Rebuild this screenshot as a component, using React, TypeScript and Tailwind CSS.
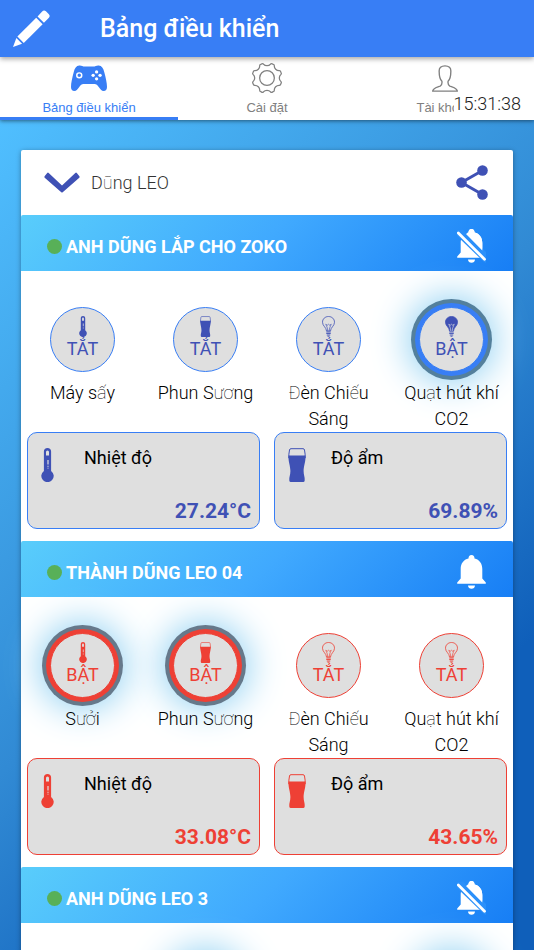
import React, { useState } from "react";
import clsx from "clsx";

type Kind = "thermo" | "pint" | "bulb";
type Tone = "blue" | "red";

interface Device {
  name: string;
  kind: Kind;
  on: boolean;
}

interface Sensor {
  name: string;
  kind: Kind;
  value: string;
}

interface Station {
  title: string;
  tone: Tone;
  muted: boolean;
  devices: Device[];
  sensors: Sensor[];
}

const stations: Station[] = [
  {
    title: "ANH DŨNG LẮP CHO ZOKO",
    tone: "blue",
    muted: true,
    devices: [
      { name: "Máy sấy", kind: "thermo", on: false },
      { name: "Phun Sương", kind: "pint", on: false },
      { name: "Đèn Chiếu Sáng", kind: "bulb", on: false },
      { name: "Quạt hút khí CO2", kind: "bulb", on: true },
    ],
    sensors: [
      { name: "Nhiệt độ", kind: "thermo", value: "27.24°C" },
      { name: "Độ ẩm", kind: "pint", value: "69.89%" },
    ],
  },
  {
    title: "THÀNH DŨNG LEO 04",
    tone: "red",
    muted: false,
    devices: [
      { name: "Sưởi", kind: "thermo", on: true },
      { name: "Phun Sương", kind: "pint", on: true },
      { name: "Đèn Chiếu Sáng", kind: "bulb", on: false },
      { name: "Quạt hút khí CO2", kind: "bulb", on: false },
    ],
    sensors: [
      { name: "Nhiệt độ", kind: "thermo", value: "33.08°C" },
      { name: "Độ ẩm", kind: "pint", value: "43.65%" },
    ],
  },
  {
    title: "ANH DŨNG LEO 3",
    tone: "blue",
    muted: true,
    devices: [
      { name: "Sưởi", kind: "thermo", on: false },
      { name: "Phun Sương", kind: "pint", on: true },
      { name: "Đèn Chiếu Sáng", kind: "bulb", on: false },
      { name: "Quạt hút khí CO2", kind: "bulb", on: true },
    ],
    sensors: [],
  },
];

/* ---------- icons ---------- */

const PencilIcon = () => (
  <svg viewBox="0 0 110 110" className="w-[37px] h-[37px]" fill="currentColor">
    <path d="M0 110 10 83 27 100Z" />
    <path d="M13 79 69 23 88 42 32 98Z" />
    <path d="M73 19 86 5Q92-1 98 4L106 12Q112 18 106 24L92 38Z" />
  </svg>
);

const GamepadIcon = () => (
  <svg viewBox="0 0 109 78" className="w-[36px] h-[26px]" fill="currentColor">
    <path d="M25 1C31 0 35 4 42 4H67C74 4 78 0 84 1C93 2 98 9 101 22C105 37 109 54 109 66C109 74 105 78 99 78C92 78 89 73 84 66C80 60 77 57 71 57H38C32 57 29 60 25 66C20 73 17 78 10 78C4 78 0 74 0 66C0 54 4 37 8 22C11 9 16 2 25 1Z" />
    <circle cx="25" cy="31" r="7.5" fill="none" stroke="#fff" strokeWidth="4.5" />
    <g fill="#fff">
      <circle cx="67" cy="31" r="5" />
      <circle cx="88" cy="31" r="5" />
      <circle cx="77.5" cy="20.5" r="5" />
      <circle cx="77.5" cy="41.5" r="5" />
    </g>
  </svg>
);

// eight teeth with a scooped valley between each pair
const gearPoint = (deg: number, r: number) => {
  const a = (deg * Math.PI) / 180;
  return `${(50 + r * Math.cos(a)).toFixed(1)} ${(50 + r * Math.sin(a)).toFixed(1)}`;
};
const gearPath =
  Array.from({ length: 8 }, (_, i) => {
    const mid = i * 45 + 22.5;
    return `${i === 0 ? "M" : "L"}${gearPoint(mid - 8, 45)}Q${gearPoint(mid - 6, 48)} ${gearPoint(mid, 47)}Q${gearPoint(mid + 6, 48)} ${gearPoint(mid + 8, 45)}A15 15 0 0 0 ${gearPoint(mid + 37, 45)}`;
  }).join("") + "Z";

const GearIcon = () => (
  <svg viewBox="0 0 100 100" className="w-8 h-8" fill="none" stroke="currentColor" strokeWidth="4" strokeLinejoin="round">
    <path d={gearPath} />
    <circle cx="50" cy="50" r="23" />
  </svg>
);

const PersonIcon = () => (
  <svg viewBox="0 0 76 78" className="w-[26px] h-[27px]" fill="none" stroke="currentColor" strokeWidth="4" strokeLinejoin="round">
    <path d="M38 2C49 2 56 8 55 19C55 32 53 41 47 47C46 55 46 58 52 61C62 65 73 66 74 76H2C3 66 14 65 24 61C30 58 30 55 29 47C23 41 21 32 21 19C20 8 27 2 38 2Z" />
  </svg>
);

const ShareIcon = () => (
  <svg viewBox="0 0 32 35" className="w-8 h-[35px]" fill="currentColor">
    <path d="M26.5 5.5 5.5 17.500 26.5 29.5" fill="none" stroke="currentColor" strokeWidth="3" />
    <circle cx="5.5" cy="17.5" r="5.3" />
    <circle cx="26.5" cy="5.5" r="5.3" />
    <circle cx="26.5" cy="29.5" r="5.3" />
  </svg>
);

const ChevronIcon = () => (
  <svg viewBox="0 0 36 21" className="w-9 h-[21px]" fill="currentColor">
    <path d="M.6 4.300 3.200 1Q3.900.2 4.700.9L18 13.500 31.300.9Q32.100.2 32.800 1L35.400 4.300Q36 5 35.300 5.700L18.700 20.200Q18 20.800 17.300 20.200L.7 5.700Q0 5 .6 4.300Z" />
  </svg>
);

const BellIcon = ({ muted }: { muted: boolean }) => (
  <svg viewBox="0 0 29 34" className="w-[29px] h-[34px]" fill="currentColor">
    <path d="M14.500 0C16.500 0 17.500 1.300 17.500 3.500C22.500 4.700 25.300 8.500 25.300 14V23.500L28.800 27.500V28.800H.2V27.500L3.700 23.500V14C3.700 8.500 6.500 4.700 11.500 3.500C11.500 1.300 12.500 0 14.500 0Z" />
    <path d="M11 30.400H18C17.800 32.500 16.500 33.700 14.500 33.700S11.200 32.500 11 30.400Z" />
    {muted && (
      <>
        <path d="M-1 6V1.500L6 .5 30 24V34L27 33Z" fill="#2b90fa" />
        <path d="M11.500 3.500C11.500 1.300 12.500 0 14.500 0S17.500 1.300 17.500 3.500C22.500 4.700 25.300 8.500 25.300 14V21.500L9 5Z" />
        <path d="M1.300 4 27.500 30.200" stroke="currentColor" strokeWidth="2.8" strokeLinecap="round" />
      </>
    )}
  </svg>
);

const DeviceIcon = ({ kind, lit, className }: { kind: Kind; lit?: boolean; className?: string }) => {
  if (kind === "thermo") {
    return (
      <svg viewBox="0 0 13 34" className={className} fill="currentColor">
        <path d="M6.500 0C8.700 0 10.100 1.500 10.100 3.500V22.900A6.200 6.200 0 1 1 2.900 22.900V3.500C2.900 1.500 4.300 0 6.500 0Z" />
        <path d="M5 7.500V4Q5 2.400 6.500 2.400T8 4V7.500Z" fill="#dfdfdf" />
        <path d="M7 12V16.500M7 17.700V18.700M7 19.700V20.500" stroke="#dfdfdf" strokeWidth="1.2" />
      </svg>
    );
  }
  if (kind === "pint") {
    return (
      <svg viewBox="0 0 18 34" className={className} fill="currentColor">
        <path d="M3 .7H15Q16.300.7 16.500 2C17 5 17.400 7.500 17.200 10H.8C.6 7.500 1 5 1.500 2Q1.700.7 3 .7Z" fill="none" stroke="currentColor" strokeWidth="1" />
        <path d="M.5 7.500H17.500C17.800 14 15.600 18 15.600 23C15.600 27 17 29 16.700 32.500Q16.500 34 15.200 34H2.800Q1.500 34 1.300 32.500C1 29 2.400 27 2.400 23C2.400 18 .2 14 .5 7.500Z" />
      </svg>
    );
  }
  return (
    <svg viewBox="0 0 26 42" className={className} fill="none" stroke="currentColor" strokeWidth="1.6">
      <path
        d="M9 30C9 23 1 20 1 12.500C1 6 6 1 13 1S25 6 25 12.500C25 20 17 23 17 30Z"
        fill={lit ? "currentColor" : "none"}
      />
      <path
        d="M11.500 30C11.500 24 9 20 7.500 16.500L10.500 18.500 13 16.500 15.500 18.500 18.500 16.500C17 20 14.500 24 14.500 30"
        stroke={lit ? "#dfdfdf" : "currentColor"}
        strokeWidth="1.3"
      />
      <path d="M8.500 32H17.500M8.500 35H17.500M9.500 38H16.500M11 40.500H15" strokeWidth="1.8" />
    </svg>
  );
};

/* ---------- pieces ---------- */

// accented letters missing from the light face are set in the thin one
const LightText = ({ text }: { text: string }) => (
  <>
    {text.split(/([ũấươởĐếạ]+)/).map((part, i) =>
      i % 2 ? (
        <span key={i} className="font-thin">
          {part}
        </span>
      ) : (
        part
      )
    )}
  </>
);

const deviceSize: Record<Kind, string> = {
  thermo: "w-2 h-[21px]",
  pint: "w-[11px] h-[21px]",
  bulb: "w-[13px] h-[21px]",
};

const DeviceButton = ({ device, tone }: { device: Device; tone: Tone }) => {
  const [on, setOn] = useState(device.on);

  return (
    <div className="flex flex-col items-center gap-2">
      <button
        type="button"
        aria-label={`${device.name} ${on ? "BẬT" : "TẮT"}`}
        onClick={() => setOn(!on)}
        className={clsx(
          "flex w-[65px] h-[65px] flex-col items-center rounded-full border bg-[#dfdfdf] pt-2",
          tone === "blue" ? "border-[#387ef5] text-[#3f51b5]" : "border-[#ee4035] text-[#ee4035]",
          on && tone === "blue" && "shadow-[0_0_0_4px_#387ef5,0_0_0_8px_#54809c,0_0_36px_11px_#8fd0f2]",
          on && tone === "red" && "shadow-[0_0_0_4px_#ee4035,0_0_0_8px_#66798b,0_0_36px_11px_#8fd0f2]"
        )}
      >
        <DeviceIcon kind={device.kind} lit={on} className={deviceSize[device.kind]} />
        <span className="text-[18px] leading-6">{on ? "BẬT" : "TẮT"}</span>
      </button>
      <p className="h-[52px] px-3 text-center text-[18px] leading-[26px] font-light text-black">
        <LightText text={device.name} />
      </p>
    </div>
  );
};

const SensorCard = ({ sensor, tone }: { sensor: Sensor; tone: Tone }) => (
  <div
    className={clsx(
      "flex h-[97px] flex-col justify-between rounded-[10px] border bg-[#dfdfdf] pr-2",
      tone === "blue" ? "border-[#387ef5] text-[#3f51b5]" : "border-[#ee4035] text-[#ee4035]"
    )}
  >
    <div className="flex items-start pt-[15px]">
      <div className="w-14 pl-[13px]">
        <DeviceIcon kind={sensor.kind} className={sensor.kind === "pint" ? "w-[18px] h-[34px]" : "w-[13px] h-[34px]"} />
      </div>
      <span className="text-[18px] leading-5 text-black">{sensor.name}</span>
    </div>
    <strong className="pb-[3px] text-right text-[21px] leading-7 font-bold">{sensor.value}</strong>
  </div>
);

const StationSection = ({ station }: { station: Station }) => {
  const [muted, setMuted] = useState(station.muted);

  return (
    <section>
      <div className="flex h-14 items-center rounded-t-xs bg-[linear-gradient(135deg,#59cdfb,#40a9fe_50%,#177ef5)] pt-1.5 pr-[27px] pl-[26px]">
        <span className="w-[15px] h-[15px] rounded-full bg-[#58b058]" />
        <h2 className="flex-1 pt-0.5 pl-1 text-[18px] leading-6 font-bold text-white">{station.title}</h2>
        <button type="button" aria-label="Thông báo" className="text-white" onClick={() => setMuted(!muted)}>
          <BellIcon muted={muted} />
        </button>
      </div>
      <div className="pt-9 pb-3">
        <div className="grid grid-cols-4">
          {station.devices.map((device) => (
            <DeviceButton key={device.name} device={device} tone={station.tone} />
          ))}
        </div>
        <div className="grid grid-cols-2 gap-3.5 px-1.5">
          {station.sensors.map((sensor) => (
            <SensorCard key={sensor.name} sensor={sensor} tone={station.tone} />
          ))}
        </div>
      </div>
    </section>
  );
};

const tabs = [
  { label: "Bảng điều khiển", icon: <GamepadIcon /> },
  { label: "Cài đặt", icon: <GearIcon /> },
  { label: "Tài khoản", icon: <PersonIcon /> },
];

const App = () => {
  const [active, setActive] = useState(0);

  return (
    <div className="flex h-screen flex-col overflow-hidden font-[Roboto,sans-serif]">
      <header className="z-20 flex h-[57px] shrink-0 items-center bg-[#387ef5] pl-[13px] text-white shadow-[0_2px_5px_rgba(0,0,0,0.35)]">
        <button type="button" aria-label="Chỉnh sửa">
          <PencilIcon />
        </button>
        <h1 className="pl-[50px] text-[25px] leading-8 font-medium">Bảng điều khiển</h1>
      </header>

      <nav className="relative z-10 grid shrink-0 grid-cols-3 bg-white shadow-[0_1px_4px_rgba(0,0,0,0.5)]">
        {tabs.map((tab, i) => (
          <button
            key={tab.label}
            type="button"
            onClick={() => setActive(i)}
            className={clsx(
              "flex flex-col items-center border-b-[3px] pt-[5px] font-['Liberation_Sans',Arial,sans-serif]",
              active === i ? "border-[#387ef5] text-[#387ef5]" : "border-transparent text-[#808080]"
            )}
          >
            <span className="flex h-8 items-center">{tab.icon}</span>
            <span className="mt-1 text-[13px] leading-[19px]">{tab.label}</span>
          </button>
        ))}
        {/* Clock sits over the last tab */}
        <time className="absolute right-[13px] bottom-1 bg-white text-[18px] leading-6 font-light text-[#222]">15:31:38</time>
      </nav>

      <main className="flex-1 overflow-y-auto bg-[linear-gradient(135deg,#50bfff,#318ad4_48%,#0f5fba_77%)] px-[21px] pt-[30px] [scrollbar-width:none]">
        <div className="rounded-xs bg-white shadow-[0_1px_5px_rgba(0,0,0,0.35)]">
          <div className="flex h-[65px] items-center pr-[25px] pl-[23px] text-[#3f51b5]">
            <button type="button" aria-label="Thu gọn">
              <ChevronIcon />
            </button>
            <p className="flex-1 pl-[11px] text-[18px] leading-6 font-light text-[#333]">
              <LightText text="Dũng LEO" />
            </p>
            <button type="button" aria-label="Chia sẻ">
              <ShareIcon />
            </button>
          </div>
          {stations.map((station) => (
            <StationSection key={station.title} station={station} />
          ))}
        </div>
      </main>
    </div>
  );
};

export default App;
